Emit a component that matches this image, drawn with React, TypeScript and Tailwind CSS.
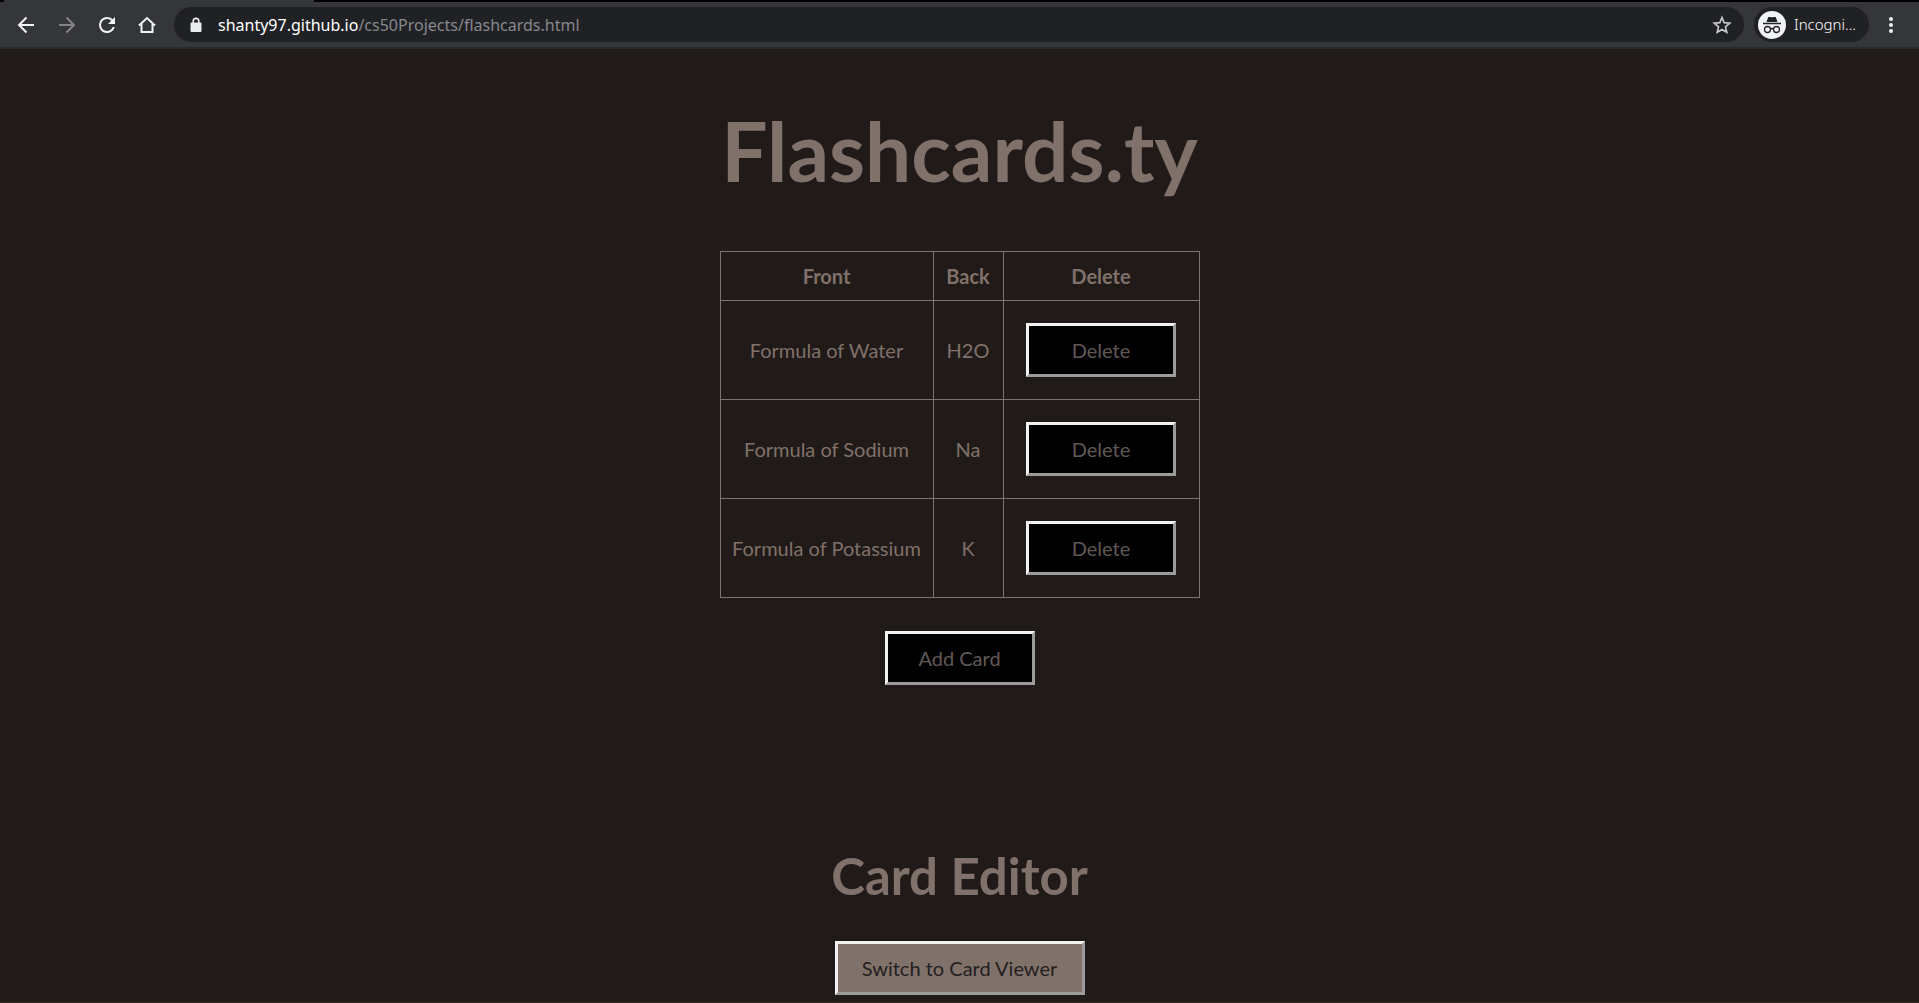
import { useState } from "react";

type Card = { front: string; back: string };

const initialCards: Card[] = [
  { front: "Formula of Water", back: "H2O" },
  { front: "Formula of Sodium", back: "Na" },
  { front: "Formula of Potassium", back: "K" },
];

const frame =
  "h-[54px] border-[3px] border-t-[#f2f2f2] border-l-[#f2f2f2] border-r-[#9b9b9b] border-b-[#9b9b9b] text-xl";

function BrowserBar() {
  return (
    <header className="bg-black font-['Noto_Sans',sans-serif]">
      <div className="ml-1 h-0.5 w-[310px] bg-[#35363a]" />
      <div className="flex h-[47px] items-center border-b-2 border-[#292a2d] bg-[#35363a] pl-[15px]">
        <nav className="flex shrink-0 items-center gap-4">
          <button type="button" aria-label="Back" className="size-6">
            <svg viewBox="0 0 24 24" className="size-6" fill="none" stroke="#f1f3f4" strokeWidth="2">
              <path d="M19 12H4M11.5 4.5L4 12l7.5 7.5" />
            </svg>
          </button>
          <button type="button" aria-label="Forward" className="size-6">
            <svg viewBox="0 0 24 24" className="size-6" fill="none" stroke="#828387" strokeWidth="2">
              <path d="M4 12h15M11.5 4.5L19 12l-7.5 7.5" />
            </svg>
          </button>
          <button type="button" aria-label="Reload" className="size-6">
            <svg viewBox="0 0 24 24" className="size-6">
              <path
                d="M17.65 6.35A7.96 7.96 0 0 0 12 4a8 8 0 1 0 7.73 10h-2.08A6 6 0 1 1 12 6c1.66 0 3.14.69 4.22 1.78L13 11h7V4z"
                fill="#f1f3f4"
              />
            </svg>
          </button>
          <button type="button" aria-label="Home" className="size-6">
            <svg viewBox="0 0 24 24" className="size-6" fill="none" stroke="#f1f3f4" strokeWidth="2">
              <path d="M4 12.500L12 5l8 7.500M6.500 11V19h11v-8" />
            </svg>
          </button>
        </nav>
        <div className="ml-[15px] flex h-[35px] min-w-0 grow items-center rounded-full bg-[#202124] pr-3 pl-4">
          <svg viewBox="0 0 12 16" className="h-4 w-3 shrink-0" aria-hidden="true">
            <path d="M3.200 7V4.200a2.800 2.800 0 0 1 5.600 0V7" fill="none" stroke="#e8eaed" strokeWidth="1.600" />
            <rect x="0.500" y="5.500" width="11" height="9.500" rx="1" fill="#e8eaed" />
          </svg>
          <p className="ml-4 grow truncate text-base text-[#85888d]">
            <span className="text-white">shanty97.github.io</span>/cs50Projects/flashcards.html
          </p>
          <button type="button" aria-label="Bookmark this page" className="size-5 shrink-0">
            <svg viewBox="0 0 24 24" className="size-5" fill="none" stroke="#c4c6ca" strokeWidth="2">
              <path d="M12 3l2.600 6.200 6.700.6-5.100 4.400 1.500 6.600L12 17.300l-5.700 3.500 1.500-6.600L2.700 9.800l6.700-.6z" />
            </svg>
          </button>
        </div>
        <button
          type="button"
          className="ml-[10px] flex h-[35px] w-[115px] shrink-0 items-center gap-2 rounded-full bg-[#202124] pl-1 text-[15px] font-light text-white"
        >
          <svg viewBox="0 0 28 28" className="size-7" aria-hidden="true">
            <circle cx="14" cy="14" r="14" fill="#f1f3f4" />
            <path d="M8.500 11l1.800-5h2.200l1.500.5 1.500-.5h2.200l1.800 5z" fill="#202124" />
            <path d="M5 12.500h18" stroke="#202124" strokeWidth="1.500" />
            <g fill="none" stroke="#202124" strokeWidth="1.300">
              <circle cx="9.500" cy="18.500" r="3" />
              <circle cx="18.500" cy="18.500" r="3" />
              <path d="M12.500 18q1.500-1 3 0" />
            </g>
          </svg>
          Incogni...
        </button>
        <button type="button" aria-label="Menu" className="mr-[18px] ml-3 size-5 shrink-0">
          <svg viewBox="0 0 20 20" className="size-5" fill="#f1f3f4">
            <circle cx="10" cy="4" r="2" />
            <circle cx="10" cy="10" r="2" />
            <circle cx="10" cy="16" r="2" />
          </svg>
        </button>
      </div>
    </header>
  );
}

export default function App() {
  const [cards, setCards] = useState(initialCards);
  const cell = "border border-[#80716a] px-2.5";

  return (
    <div className="flex min-h-screen flex-col border-b border-[#3d2a26] bg-[#201b18]">
      <BrowserBar />
      <main className="flex grow flex-col items-center font-['Lato',sans-serif] text-xl text-[#80716a]">
        <h1 className="mt-[53px] text-[82px] leading-24 font-bold">Flashcards.ty</h1>
        <table className="mt-[53px] border-collapse text-center">
          <thead>
            <tr className="h-[49px]">
              <th className={`${cell} w-[213px]`}>Front</th>
              <th className={`${cell} w-[70px]`}>Back</th>
              <th className={`${cell} w-[196px]`}>Delete</th>
            </tr>
          </thead>
          <tbody>
            {cards.map((card) => (
              <tr key={card.front} className="h-[99px]">
                <td className={cell}>{card.front}</td>
                <td className={cell}>{card.back}</td>
                <td className={cell}>
                  <button
                    type="button"
                    className={`${frame} mx-auto block w-[150px] bg-black text-[#605856]`}
                    onClick={() => setCards(cards.filter((c) => c !== card))}
                  >
                    Delete
                  </button>
                </td>
              </tr>
            ))}
          </tbody>
        </table>
        <button type="button" className={`${frame} mt-[33px] w-[150px] bg-black text-[#605856]`}>
          Add Card
        </button>
        <h2 className="mt-[161px] text-[51px] leading-[60px] font-bold">Card Editor</h2>
        <button type="button" className={`${frame} mt-[35px] w-[250px] bg-[#80716a] text-[#231f20]`}>
          Switch to Card Viewer
        </button>
      </main>
    </div>
  );
}
